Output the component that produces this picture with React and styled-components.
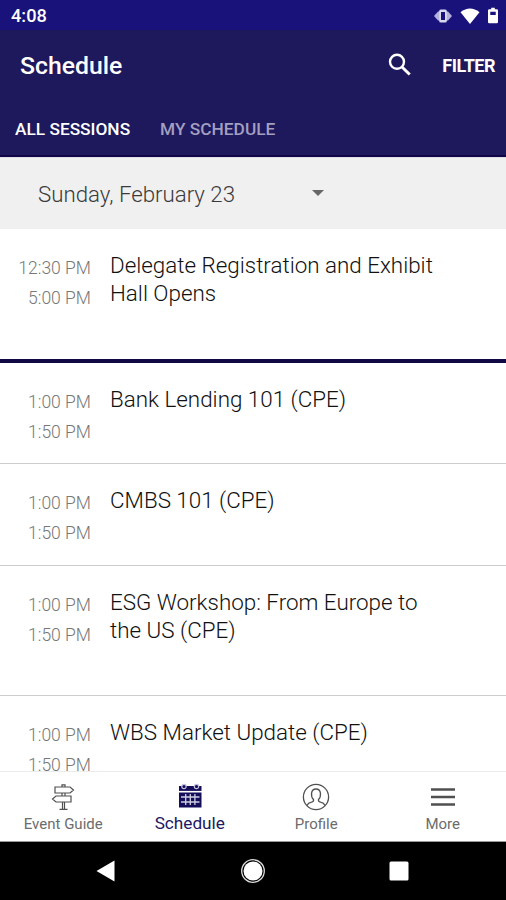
import { useState } from "react";
import styled, { createGlobalStyle } from "styled-components";

const GlobalStyle = createGlobalStyle`
  * {
    box-sizing: border-box;
  }

  body {
    margin: 0;
    font-family: Roboto, sans-serif;
    background-color: #ffffff;
  }

  button {
    padding: 0;
    border: 0;
    background: none;
    font-family: inherit;
  }
`;

const Screen = styled.div`
  display: flex;
  flex-direction: column;
  width: 506px;
  height: 900px;
  overflow: hidden;
  background-color: #ffffff;
`;

const StatusBar = styled.div`
  display: flex;
  flex: none;
  align-items: center;
  justify-content: space-between;
  height: 30px;
  padding: 1px 8px 0 11px;
  background-color: #19127a;
  color: #ffffff;
`;

const Clock = styled.span`
  font-size: 18.2px;
  font-weight: 500;
  line-height: 28px;
`;

const StatusIcons = styled.div`
  display: flex;
  align-items: center;
  gap: 8px;

  svg {
    display: block;
  }
`;

const Header = styled.header`
  flex: none;
  height: 127px;
  background-color: #1e185c;
  border-bottom: 2px solid #100548;
`;

const Toolbar = styled.div`
  display: flex;
  align-items: center;
  height: 72px;
  padding: 0 11px 0 20px;
  color: #ffffff;
`;

const Title = styled.h1`
  flex: 1;
  margin: -2px 0 0;
  font-size: 24.8px;
  font-weight: 500;
`;

const SearchButton = styled.button`
  display: flex;
  margin: -4px 31px 0 0;
  color: #ffffff;
`;

const FilterButton = styled.button`
  margin-top: -1px;
  color: #ffffff;
  font-size: 18px;
  font-weight: 700;
  letter-spacing: -0.5px;
`;

const Tabs = styled.div`
  display: flex;
  gap: 30px;
  padding: 0 15px;
`;

const Tab = styled.button`
  height: 54px;
  font-size: 17.3px;
  font-weight: 500;
  color: ${({ $active }) => ($active ? "#ffffff" : "#a39fc0")};
`;

const DateBar = styled.div`
  display: flex;
  flex: none;
  align-items: center;
  height: 72px;
  padding: 1px 0 0 38px;
  border-top: 1px solid #dcdfe2;
  background-color: #f0f0f0;
  color: #3a3a3a;
`;

const DateText = styled.span`
  width: 274px;
  font-size: 22.25px;
  font-weight: 300;
`;

const Caret = styled.span`
  width: 0;
  margin-top: -2px;
  border: 6px solid transparent;
  border-top-color: #666666;
  border-bottom: 0;
`;

const Sessions = styled.main`
  flex: 1;
  min-height: 0;
  overflow: hidden;
`;

const Session = styled.div`
  display: flex;
  height: ${({ $height }) => $height}px;
  padding-top: 22px;
  border-bottom: ${({ $divider }) =>
    $divider ? "4px solid #110946" : "1px solid #cdcdcd"};
`;

const Times = styled.div`
  width: 91px;
  margin-right: 19px;
  padding-top: 2px;
  font-size: 17.5px;
  font-weight: 300;
  line-height: 30px;
  text-align: right;
  color: #777777;
`;

const SessionTitle = styled.div`
  width: 330px;
  font-size: 22.4px;
  font-weight: 300;
  line-height: 28px;
  color: #111111;
`;

const BottomNav = styled.nav`
  display: flex;
  flex: none;
  height: 71px;
  border-top: 1px solid #ececec;
  border-bottom: 1px solid #9a9a9a;
`;

const NavItem = styled.button`
  display: flex;
  flex: 1;
  flex-direction: column;
  align-items: center;
  justify-content: flex-start;
  color: ${({ $active }) => ($active ? "#211763" : "#6c6c6c")};
  font-size: ${({ $active }) => ($active ? "17.2px" : "15px")};
  line-height: 20px;

  svg {
    display: block;
    margin: 11px 0 ${({ $active }) => ($active ? "2px" : "3px")};
    color: ${({ $active }) => ($active ? "#150c5a" : "#505050")};
  }
`;

const SystemBar = styled.div`
  display: flex;
  flex: none;
  align-items: center;
  justify-content: space-between;
  height: 58px;
  padding: 0 97px 0 96px;
  background-color: #000000;
`;

const VibrateIcon = () => (
  <svg width="18" height="16" viewBox="0 0 18 16">
    <path d="M0 8l4-4.500h10l4 4.500-4 4.500h-10z" fill="#b4b2dc" />
    <rect x="5.200" y="1.500" width="7.600" height="13" rx="1.500" fill="#d8d8f0" />
    <rect x="7" y="4" width="4" height="8" fill="#19127a" />
  </svg>
);

const WifiIcon = () => (
  <svg width="20" height="16" viewBox="0 0 20 16">
    <path d="M0.500 4.300Q10-3.200 19.500 4.300L10 16z" fill="#fff" />
  </svg>
);

const BatteryIcon = () => (
  <svg width="10" height="17" viewBox="0 0 11 18">
    <path
      d="M1.500 2H3.500V.5h4V2h2Q11 2 11 3.500v12.700q0 1.300-1.300 1.300H1.300Q0 17.500 0 16.200V3.500Q0 2 1.500 2zM2.500 5v3.500h6V5z"
      fill="#fff"
      fillRule="evenodd"
    />
  </svg>
);

const SearchIcon = () => (
  <svg width="23" height="23" viewBox="0 0 23 23" fill="none" stroke="currentColor">
    <circle cx="9" cy="8.800" r="7" strokeWidth="2.400" />
    <path d="M14 14l7.700 7.500" strokeWidth="3" />
  </svg>
);

const GuideIcon = () => (
  <svg width="26" height="28" viewBox="0 0 26 28" fill="none" stroke="currentColor" strokeWidth="1.200">
    <path d="M5 4h15l3.500 3-3.500 3H5zM21 13h-15l-3.500 3 3.500 3h15z" />
    <path d="M12 4V1.800h3V4M12 10v3M15 10v3M12.500 19v7M14.500 19v7M9.500 26.300h8" />
  </svg>
);

const CalendarIcon = () => (
  <svg width="26" height="28" viewBox="0 0 26 28">
    <path d="M2 3h22.500v21.500h-22.500z" fill="currentColor" />
    <path d="M1.500 8.700h23.500" stroke="#ffffff" strokeWidth="1.600" />
    <path d="M4 14h18.500M4 19h18.500M8.700 11v11M13.300 11v11M17.900 11v11" stroke="#cfcfe3" strokeWidth="1.300" />
    <circle cx="7" cy="3.500" r="2.200" fill="currentColor" stroke="#c4c4dc" strokeWidth="1.200" />
    <circle cx="19.500" cy="3.500" r="2.200" fill="currentColor" stroke="#c4c4dc" strokeWidth="1.200" />
  </svg>
);

const ProfileIcon = () => (
  <svg width="28" height="28" viewBox="0 0 28 28" fill="none" stroke="currentColor" strokeWidth="1.300">
    <circle cx="14" cy="14" r="12.600" />
    <path d="M5 22.500q1-2.500 4.500-3.300 2.500-.7 2-2.700C8.800 14 8.200 6 14 6s5.200 8 2.500 10.500q-.5 2 2 2.700Q22 20 23 22.500" />
  </svg>
);

const MenuIcon = () => (
  <svg width="26" height="28" viewBox="0 0 26 28" stroke="currentColor" strokeWidth="2.600">
    <path d="M1 6.500h24M1 14h24M1 21.500h24" />
  </svg>
);

const SystemIcons = () => (
  <>
    <svg width="19" height="22" viewBox="0 0 19 22">
      <path d="M0.500 11L18.500 0.500v21z" fill="#fff" />
    </svg>
    <svg width="26" height="26" viewBox="-1 0 26 26">
      <circle cx="13" cy="13" r="9.500" fill="#fff" />
      <circle cx="13" cy="13" r="11.300" fill="none" stroke="#ddd" strokeWidth="1.300" />
    </svg>
    <svg width="20" height="20" viewBox="0 0 20 20">
      <rect x="0.500" y="0.500" width="19" height="19" rx="1.500" fill="#fff" />
    </svg>
  </>
);

const tabs = ["ALL SESSIONS", "MY SCHEDULE"];

const sessions = [
  { start: "12:30 PM", end: "5:00 PM", title: "Delegate Registration and Exhibit Hall Opens", height: 134, divider: true },
  { start: "1:00 PM", end: "1:50 PM", title: "Bank Lending 101 (CPE)", height: 101 },
  { start: "1:00 PM", end: "1:50 PM", title: "CMBS 101 (CPE)", height: 102 },
  { start: "1:00 PM", end: "1:50 PM", title: "ESG Workshop: From Europe to the US (CPE)", height: 130 },
  { start: "1:00 PM", end: "1:50 PM", title: "WBS Market Update (CPE)", height: 102 },
];

const navItems = [
  { label: "Event Guide", Icon: GuideIcon },
  { label: "Schedule", Icon: CalendarIcon },
  { label: "Profile", Icon: ProfileIcon },
  { label: "More", Icon: MenuIcon },
];

const App = () => {
  const [activeTab, setActiveTab] = useState("ALL SESSIONS");

  return (
    <Screen>
      <GlobalStyle />
      <StatusBar>
        <Clock>4:08</Clock>
        <StatusIcons>
          <VibrateIcon />
          <WifiIcon />
          <BatteryIcon />
        </StatusIcons>
      </StatusBar>
      <Header>
        <Toolbar>
          <Title>Schedule</Title>
          <SearchButton aria-label="Search">
            <SearchIcon />
          </SearchButton>
          <FilterButton>FILTER</FilterButton>
        </Toolbar>
        <Tabs>
          {tabs.map((tab) => (
            <Tab key={tab} $active={tab === activeTab} onClick={() => setActiveTab(tab)}>
              {tab}
            </Tab>
          ))}
        </Tabs>
      </Header>
      <DateBar>
        <DateText>Sunday, February 23</DateText>
        <Caret />
      </DateBar>
      <Sessions>
        {sessions.map((session) => (
          <Session key={session.title} $height={session.height} $divider={session.divider}>
            <Times>
              <div>{session.start}</div>
              <div>{session.end}</div>
            </Times>
            <SessionTitle>{session.title}</SessionTitle>
          </Session>
        ))}
      </Sessions>
      <BottomNav>
        {navItems.map(({ label, Icon }) => (
          <NavItem key={label} $active={label === "Schedule"}>
            <Icon />
            {label}
          </NavItem>
        ))}
      </BottomNav>
      <SystemBar>
        <SystemIcons />
      </SystemBar>
    </Screen>
  );
};

export default App;
